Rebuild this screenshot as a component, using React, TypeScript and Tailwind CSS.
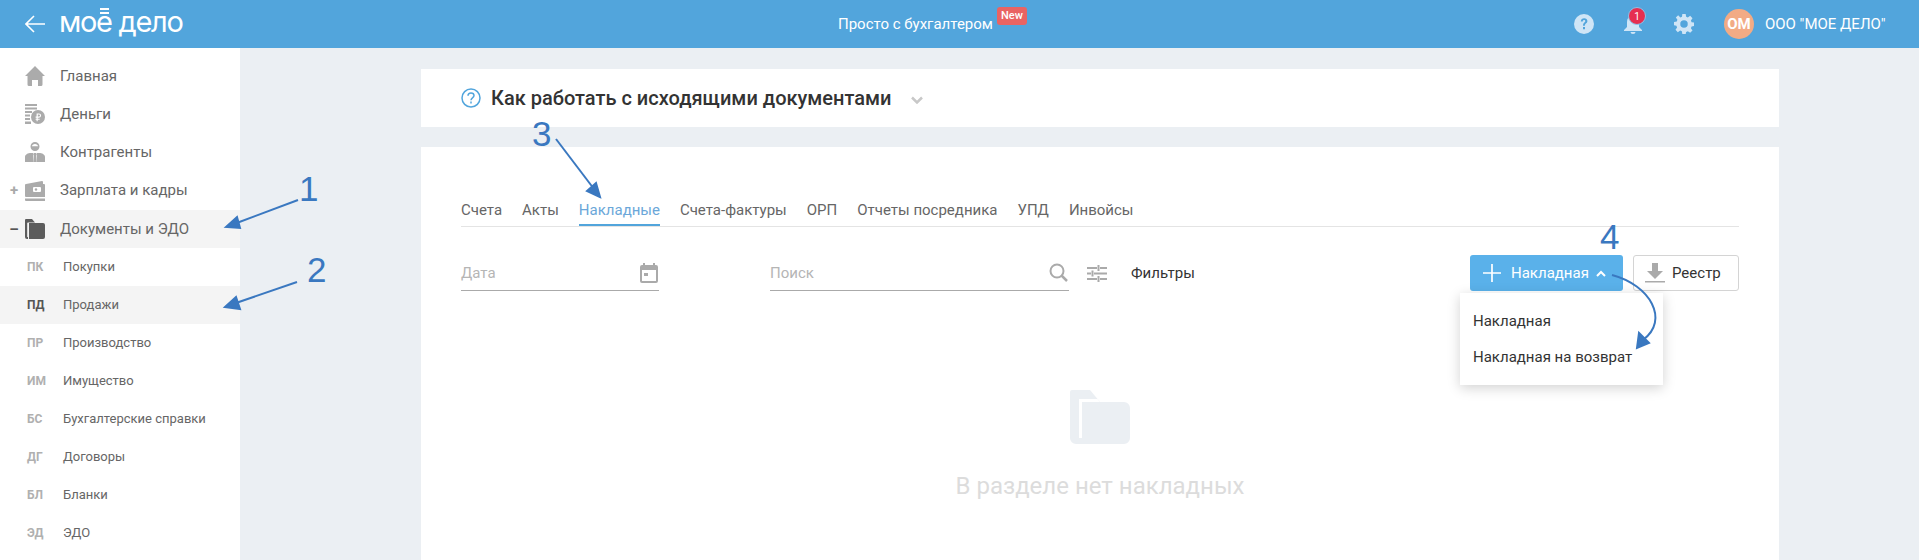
import { FC, ReactNode } from "react";

const roboto = "font-['Roboto',sans-serif]";

const HomeIcon = () => (
  <svg width="20" height="20" viewBox="0 0 20 20" fill="#ababab">
    <path d="M10 0 20 10h-2.500v8.500a1.500 1.500 0 0 1-1.500 1.500h-3v-6H7v6H4a1.500 1.500 0 0 1-1.500-1.500V10H0z" />
  </svg>
);

const MoneyIcon = () => (
  <svg width="20" height="20" viewBox="0 0 20 20" fill="#ababab">
    <path d="M0 0h12v2H0zM0 3.500h12v2H0zM0 7h7v2H0zM0 10.500h5v2H0zM0 14h5v2H0zM0 17.500h6V20H0z" />
    <circle cx="13" cy="13" r="7" />
    <path d="M11.800 9.500h2.200a2 2 0 0 1 0 4.200h-1.300v1h2v1.100h-2v1.400h-1.100v-1.400h-1v-1.100h1v-1h-1v-1.100h1V9.500zm1 1.100v2h1.200a1 1 0 0 0 0-2z" fill="#fff" />
  </svg>
);

const PersonIcon = () => (
  <svg width="20" height="20" viewBox="0 0 20 20" fill="#ababab">
    <path d="M10 0a4.500 4.500 0 0 1 4.500 4.500A4.500 4.500 0 0 1 10 9a4.500 4.500 0 0 1-4.500-4.500A4.500 4.500 0 0 1 10 0zm0 2C8.200 2 7.200 3 7 4.200h6C12.800 3 11.800 2 10 2z" />
    <path d="M6 11h2.300v9H0v-5c0-2.500 3-4 6-4zM14 11h-2.300v9H20v-5c0-2.500-3-4-6-4zM9 11h2l.5 1.500-.5 1 .5 6.500h-3l.5-6.500-.5-1z" />
  </svg>
);

const WalletIcon = () => (
  <svg width="20" height="20" viewBox="0 0 20 20" fill="#ababab">
    <path d="M1 3 17 0a1 1 0 0 1 1 1v2h1a1 1 0 0 1 1 1v12H1a1 1 0 0 1-1-1V4a1 1 0 0 1 1-1z" />
    <path d="M0 17.500h20V20H1a1 1 0 0 1-1-1z" />
    <rect x="8" y="6" width="8" height="5" rx="1" fill="#fff" />
    <circle cx="11" cy="8.500" r="1.200" fill="#ababab" />
  </svg>
);

const EmptyFolder = () => (
  <svg width="60" height="54" viewBox="0 0 60 54">
    <path d="M2 0H20L30 12H54a6 6 0 0 1 6 6V48a6 6 0 0 1-6 6H6a6 6 0 0 1-6-6V2a2 2 0 0 1 2-2z" fill="#ebeff3" />
    <path d="M9 9H27.500L30 12H12V48H9z" fill="#fff" />
  </svg>
);

const SmallFolder = () => (
  <svg width="20" height="20" viewBox="0 0 20 20" fill="#5c5c5c">
    <path d="M1 0h6l3 3.500H3a1 1 0 0 0-.8.800V18h.8v2H2a2 2 0 0 1-2-2V1a1 1 0 0 1 1-1z" />
    <path d="M4 4h14a2 2 0 0 1 2 2v12a2 2 0 0 1-2 2H4z" />
  </svg>
);

const mainNav: { icon: ReactNode; label: string; sign?: string; active?: boolean }[] = [
  { icon: <HomeIcon />, label: "Главная" },
  { icon: <MoneyIcon />, label: "Деньги" },
  { icon: <PersonIcon />, label: "Контрагенты" },
  { icon: <WalletIcon />, label: "Зарплата и кадры", sign: "+" },
  { icon: <SmallFolder />, label: "Документы и ЭДО", sign: "–", active: true },
];

const subNav = [
  { code: "ПК", label: "Покупки" },
  { code: "ПД", label: "Продажи", active: true },
  { code: "ПР", label: "Производство" },
  { code: "ИМ", label: "Имущество" },
  { code: "БС", label: "Бухгалтерские справки" },
  { code: "ДГ", label: "Договоры" },
  { code: "БЛ", label: "Бланки" },
  { code: "ЭД", label: "ЭДО" },
];

const tabs = ["Счета", "Акты", "Накладные", "Счета-фактуры", "ОРП", "Отчеты посредника", "УПД", "Инвойсы"];

const Header: FC = () => (
  <header className="h-12 bg-[#52a5dc] flex items-center text-white shrink-0">
    <svg className="ml-[25px]" width="20" height="18" viewBox="0 0 20 18" fill="none" stroke="#fff" strokeWidth="1.600">
      <path d="M20 9H1M9 1 1 9l8 8" />
    </svg>
    <div className="ml-[14px] w-[124px] relative font-['Inter',sans-serif] text-[29px] leading-none tracking-[-1.3px] whitespace-nowrap -mt-[6px]">
      мое дело
      <span className="absolute left-[41px] top-[1px] w-[9px] h-[6px] border-y-2 border-white" />
    </div>
    <div className={`ml-[655px] flex items-center text-[15px] ${roboto}`}>
      <span>Просто с бухгалтером</span>
      <span className="ml-1 -mt-[16px] w-[30px] h-[18px] rounded-[3px] bg-[#e96463] text-[11px] font-medium flex items-center justify-center">New</span>
    </div>
    <svg className="ml-[547px]" width="20" height="20" viewBox="0 0 20 20">
      <circle cx="10" cy="10" r="10" fill="#cfe5f6" />
      <path d="M6.800 7.500C6.900 5.500 8.300 4.300 10.200 4.300c1.900 0 3.200 1.100 3.200 2.800 0 2.300-2.500 2.400-2.500 4.700H9c0-3.200 2.300-3.200 2.300-4.700 0-.7-.5-1.200-1.200-1.200-.8 0-1.300.6-1.400 1.600zM9 13h2v2.200H9z" fill="#52a5dc" />
    </svg>
    <div className="ml-[29px] relative w-5 h-5">
      <svg width="20" height="20" viewBox="0 0 20 20" fill="#cfe5f6">
        <path d="M10 0c1 0 1.500.7 1.500 1.500C14.500 2.300 16 5 16 8v5l3 3v1H1v-1l3-3V8c0-3 1.500-5.700 4.500-6.500C8.500.7 9 0 10 0zM7.500 18h5a2.500 2 0 0 1-5 0z" />
      </svg>
      <span className={`absolute left-[5px] -top-[7px] w-[18px] h-[18px] rounded-full bg-[#e62e50] border border-[#8cc2e8] text-[10px] flex items-center justify-center ${roboto}`}>1</span>
    </div>
    <svg className="ml-[31px]" width="20" height="20" viewBox="0 0 24 24" fill="#cfe5f6">
      <path fillRule="evenodd" d="M10 0h4l.6 3.300 2 .8L19.400 2.200l2.800 2.800-1.900 2.800.8 2 3.300.6v4l-3.300.6-.8 2 1.900 2.800-2.800 2.800-2.800-1.900-2 .8L14 24h-4l-.6-3.300-2-.8-2.800 1.900-2.800-2.800 1.900-2.800-.8-2L0 13.600v-4l3.300-.6.8-2L2.200 4.200 5 1.400l2.600 2.700 2-.8zM12 7.500a4.500 4.500 0 1 0 0 9 4.500 4.500 0 0 0 0-9z" />
    </svg>
    <div className={`ml-[30px] w-[30px] h-[30px] rounded-full bg-[#f2ab85] text-[15px] font-bold flex items-center justify-center ${roboto}`}>ОМ</div>
    <span className={`ml-[11px] text-[15px] whitespace-nowrap ${roboto}`}>ООО "МОЕ ДЕЛО"</span>
  </header>
);

const Sidebar: FC = () => (
  <aside className={`w-60 bg-white pt-[9px] shrink-0 ${roboto}`}>
    {mainNav.map((item) => (
      <div key={item.label} className={`flex items-center ${item.sign === "+" ? "h-[39px]" : "h-[38px]"} ${item.active ? "bg-[#f4f4f4]" : ""}`}>
        <span className={`w-[25px] text-center pl-[3px] text-[15px] font-bold ${item.active ? "text-[#555]" : "text-[#aaa]"}`}>{item.sign}</span>
        {item.icon}
        <span className="ml-[15px] text-[15px] text-[#666]">{item.label}</span>
      </div>
    ))}
    {subNav.map((item) => (
      <div key={item.code} className={`h-[38px] flex items-center ${item.active ? "bg-[#f4f4f4]" : ""}`}>
        <span className={`ml-[27px] w-[36px] text-xs font-bold ${item.active ? "text-[#555]" : "text-[#b0b0b0]"}`}>{item.code}</span>
        <span className="text-[13px] text-[#666]">{item.label}</span>
      </div>
    ))}
  </aside>
);

const Toolbar: FC = () => (
  <div className="mt-[28px] h-9 flex items-center">
    <div className="w-[198px] h-[35px] border-b border-[#aaa] flex items-center justify-between">
      <span className="mt-[2px] text-[15px] text-[#b5b5b5]">Дата</span>
      <svg className="mr-[1px]" width="18" height="20" viewBox="0 0 18 20" fill="#aaa">
        <path fillRule="evenodd" d="M3 0h2v2h8V0h2v2h1a2 2 0 0 1 2 2v14a2 2 0 0 1-2 2H2a2 2 0 0 1-2-2V4a2 2 0 0 1 2-2h1zM2 7v11h14V7zm2 3h4v3H4z" />
      </svg>
    </div>
    <div className="ml-[111px] w-[299px] h-[35px] border-b border-[#aaa] flex items-center justify-between">
      <span className="mt-[2px] text-[15px] text-[#b5b5b5]">Поиск</span>
      <svg width="19" height="19" viewBox="0 0 19 19" fill="none" stroke="#aaa" strokeWidth="2" className="mr-[1px]">
        <circle cx="8" cy="8" r="6.500" />
        <path d="m12.500 12.500 5.500 5.500" strokeWidth="2.500" />
      </svg>
    </div>
    <svg className="ml-[18px]" width="20" height="17" viewBox="0 0 20 17" fill="none" stroke="#aaa" strokeWidth="2">
      <path d="M0 3h10M13 3h7M11.500 0v6M0 8.500h4M7 8.500h13M5.500 5.500v6M0 14h10M13 14h7M11.500 11v6" />
    </svg>
    <span className="ml-[24px] text-[15px] text-[#333]">Фильтры</span>
    <div className="ml-auto relative">
      <button className="w-[153px] h-9 rounded-[3px] bg-[#5ab1ea] text-white text-[15px] flex items-center pl-[13px]">
        <svg width="18" height="18" viewBox="0 0 18 18" stroke="#fff" strokeWidth="1.700">
          <path d="M9 0v18M0 9h18" />
        </svg>
        <span className="ml-[10px]">Накладная</span>
        <svg className="ml-[7px]" width="10" height="7" viewBox="0 0 10 7" fill="none" stroke="#fff" strokeWidth="2">
          <path d="m1 6 4-4 4 4" />
        </svg>
      </button>
      <div className="absolute left-[-10px] top-[38px] w-[203px] h-[92px] bg-white shadow-[0_3px_12px_rgba(0,0,0,0.18)] py-[10px] z-10">
        <div className="h-9 pl-[13px] flex items-center text-[15px] text-[#333]">Накладная</div>
        <div className="h-9 pl-[13px] flex items-center text-[15px] text-[#333]">Накладная на возврат</div>
      </div>
    </div>
    <button className="ml-[10px] w-[106px] h-9 rounded-[3px] border border-[#d4d4d4] flex items-center pl-[11px] text-[15px] text-[#333]">
      <svg width="20" height="20" viewBox="0 0 20 20" fill="#aaa">
        <path d="M7 0h6v8h5l-8 8-8-8h5zM0 18h20v1.500H0z" />
      </svg>
      <span className="ml-[7px]">Реестр</span>
    </button>
  </div>
);

const Annotations: FC = () => (
  <>
    <svg className="absolute inset-0 pointer-events-none z-20" width="1919" height="560" fill="none" stroke="#3a78c0" strokeWidth="2">
      <path d="M298 200 234 224" />
      <path d="m226 227 11-10 3 11z" fill="#3a78c0" />
      <path d="M297 282 233 304" />
      <path d="m225 307 11-10 4 12z" fill="#3a78c0" />
      <path d="m556 139 38 50" />
      <path d="m600 197-13-6 9-8z" fill="#3a78c0" />
      <path d="M1612 275C1650 285 1670 320 1643 340" />
      <path d="m1637 348 2-15 10 10z" fill="#3a78c0" />
    </svg>
    {[
      { n: "1", cls: "left-[299px] top-[169px]" },
      { n: "2", cls: "left-[307px] top-[250px]" },
      { n: "3", cls: "left-[532px] top-[114px]" },
      { n: "4", cls: "left-[1600px] top-[217px]" },
    ].map((a) => (
      <span key={a.n} className={`absolute z-20 text-[35px] leading-[40px] text-[#3a78c0] font-['Liberation_Sans',sans-serif] ${a.cls}`}>
        {a.n}
      </span>
    ))}
  </>
);

export default function App() {
  return (
    <div className={`relative h-[560px] overflow-hidden flex flex-col bg-[#ebeff3] ${roboto}`}>
      <Header />
      <div className="flex flex-1 min-h-0">
        <Sidebar />
        <main className="ml-[181px] w-[1358px] pt-[21px] flex flex-col">
          {/* Help banner */}
          <div className="h-[58px] bg-white pl-10 flex items-center shrink-0">
            <svg width="20" height="20" viewBox="0 0 20 20" fill="none" stroke="#52a5dc" strokeWidth="1.500">
              <circle cx="10" cy="10" r="9" />
              <path d="M7 7.800C7 6 8.300 5 10 5c1.700 0 3 1 3 2.600 0 2.200-3 2.400-3 4.600M10 13.500v2" />
            </svg>
            <h2 className="ml-[10px] text-[20px] font-medium text-[#333]">Как работать с исходящими документами</h2>
            <svg className="ml-[19px] mt-[3px]" width="12" height="8" viewBox="0 0 12 8" fill="none" stroke="#c8c8c8" strokeWidth="2.500">
              <path d="m1 1.500 5 5 5-5" />
            </svg>
          </div>
          {/* Documents list */}
          <div className="mt-5 flex-1 bg-white px-10 pt-[51px]">
            <div className="h-7 flex gap-5 border-b border-[#e4e4e4] box-content">
              {tabs.map((tab) => (
                <span key={tab} className={`h-7 -mb-px text-[15px] leading-6 ${tab === "Накладные" ? "text-[#6ba7d9] border-b-2 border-[#52a5dc]" : "text-[#666]"}`}>{tab}</span>
              ))}
            </div>
            <Toolbar />
            <div className="mt-[99px] flex flex-col items-center">
              <EmptyFolder />
              <p className="mt-[28px] text-[24px] leading-7 text-[#dcdcdc]">В разделе нет накладных</p>
            </div>
          </div>
        </main>
      </div>
      <Annotations />
    </div>
  );
}
